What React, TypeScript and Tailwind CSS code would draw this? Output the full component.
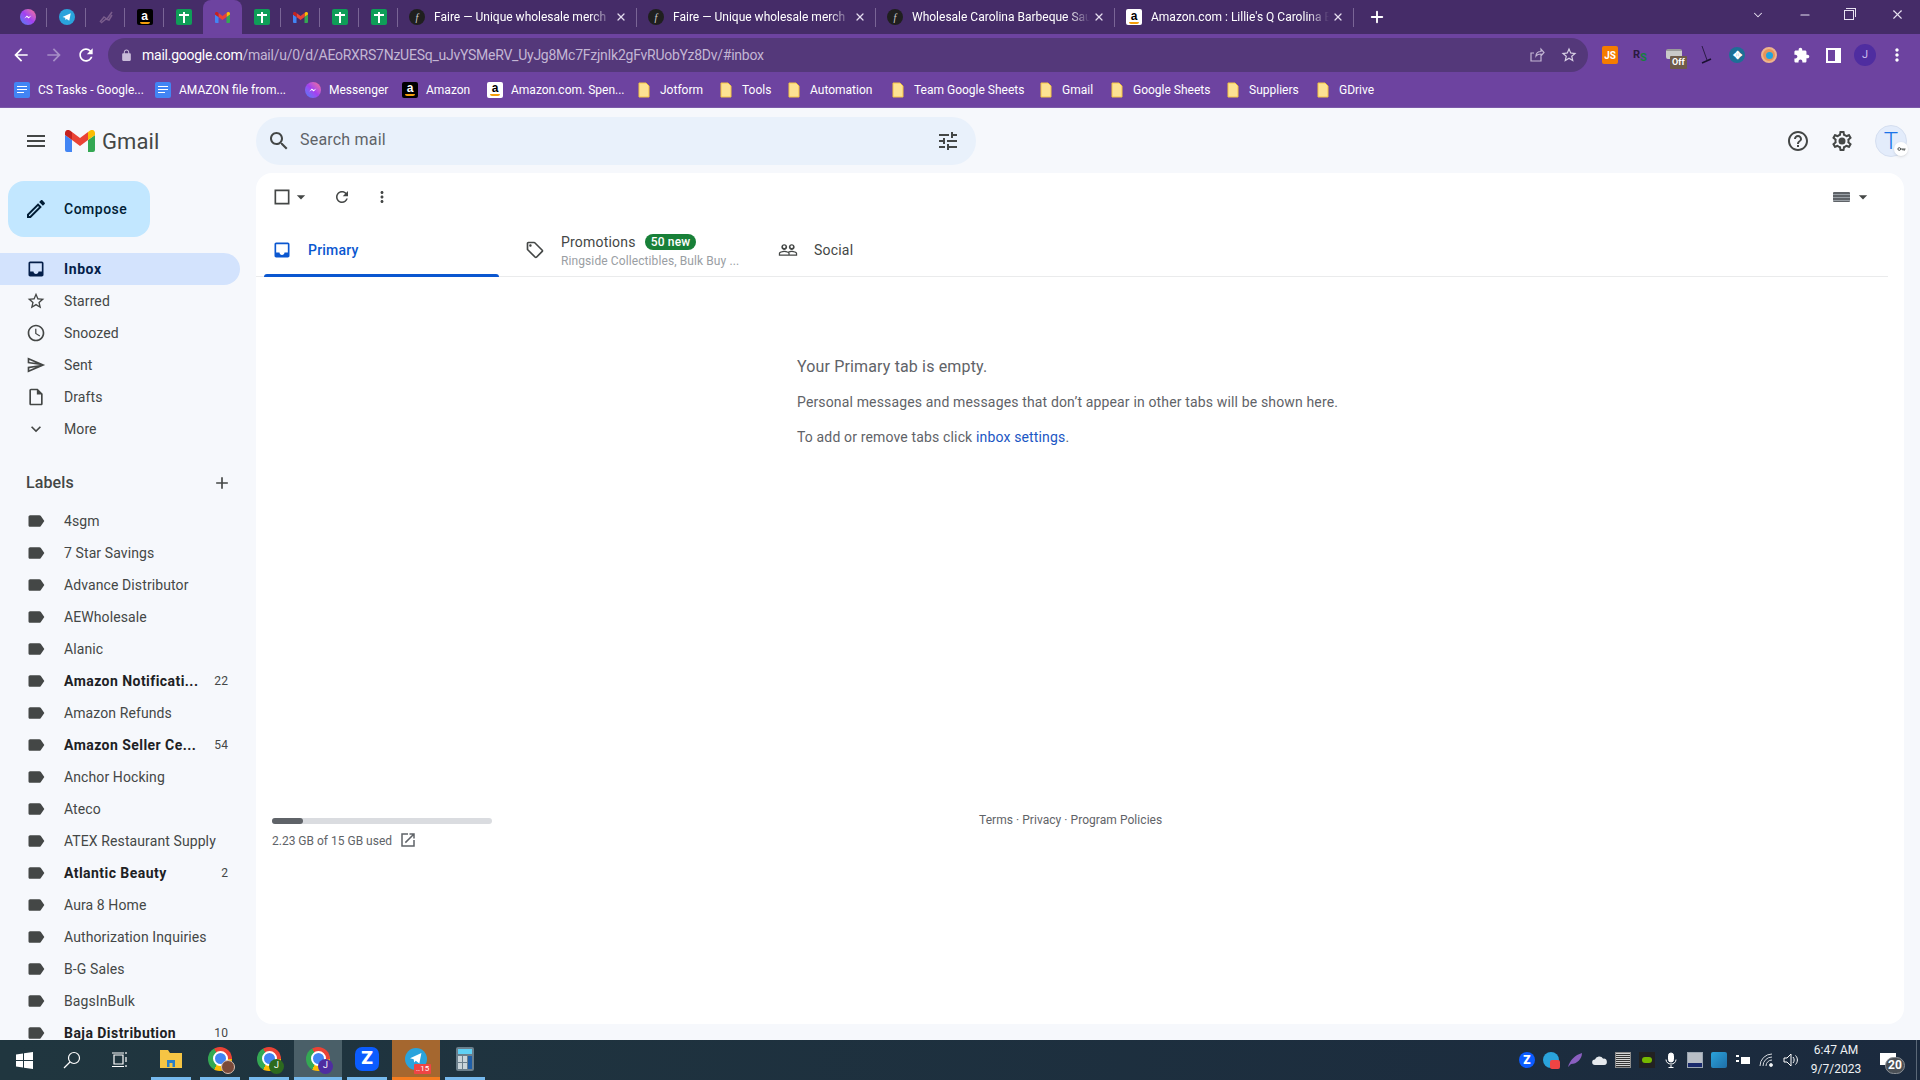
import type { ReactNode } from "react"
import { X, Plus, ChevronDown, Minus } from "lucide-react"

const paths = {
  menu: "M3 18h18v-2H3v2zm0-5h18v-2H3v2zm0-7v2h18V6H3z",
  search: "M15.5 14h-.79l-.28-.27C15.41 12.59 16 11.11 16 9.5 16 5.91 13.09 3 9.5 3S3 5.91 3 9.5 5.91 16 9.5 16c1.61 0 3.09-.59 4.23-1.57l.27.28v.79l5 4.99L20.49 19l-4.99-5zm-6 0C7.01 14 5 11.99 5 9.5S7.01 5 9.5 5 14 7.01 14 9.5 11.99 14 9.5 14z",
  tune: "M3 17v2h6v-2H3zM3 5v2h10V5H3zm10 16v-2h8v-2h-8v-2h-2v6h2zM7 9v2H3v2h4v2h2V9H7zm14 4v-2H11v2h10zm-6-4h2V7h4V5h-4V3h-2v6z",
  help: "M11 18h2v-2h-2v2zm1-16C6.48 2 2 6.48 2 12s4.48 10 10 10 10-4.48 10-10S17.52 2 12 2zm0 18c-4.41 0-8-3.59-8-8s3.59-8 8-8 8 3.59 8 8-3.59 8-8 8zm0-14c-2.21 0-4 1.79-4 4h2c0-1.1.9-2 2-2s2 .9 2 2c0 2-3 1.75-3 5h2c0-2.25 3-2.5 3-5 0-2.21-1.79-4-4-4z",
  settings: "M19.43 12.98c.04-.32.07-.64.07-.98 0-.34-.03-.66-.07-.98l2.11-1.65c.19-.15.24-.42.12-.64l-2-3.46c-.09-.16-.26-.25-.44-.25-.06 0-.12.01-.17.03l-2.49 1c-.52-.4-1.08-.73-1.69-.98l-.38-2.65C14.46 2.18 14.25 2 14 2h-4c-.25 0-.46.18-.49.42l-.38 2.65c-.61.25-1.17.59-1.69.98l-2.49-1c-.06-.02-.12-.03-.18-.03-.17 0-.34.09-.43.25l-2 3.46c-.13.22-.07.49.12.64l2.11 1.65c-.04.32-.07.65-.07.98 0 .33.03.66.07.98l-2.11 1.65c-.19.15-.24.42-.12.64l2 3.46c.09.16.26.25.44.25.06 0 .12-.01.17-.03l2.49-1c.52.4 1.08.73 1.69.98l.38 2.65c.03.24.24.42.49.42h4c.25 0 .46-.18.49-.42l.38-2.65c.61-.25 1.17-.59 1.69-.98l2.49 1c.06.02.12.03.18.03.17 0 .34-.09.43-.25l2-3.46c.12-.22.07-.49-.12-.64l-2.11-1.65zm-1.98-1.71c.04.31.05.52.05.73 0 .21-.02.43-.05.73l-.14 1.13.89.7 1.08.84-.7 1.21-1.27-.51-1.04-.42-.9.68c-.43.32-.84.56-1.25.73l-1.06.43-.16 1.13-.2 1.35h-1.4l-.19-1.35-.16-1.13-1.06-.43c-.43-.18-.83-.41-1.23-.71l-.91-.7-1.06.43-1.27.51-.7-1.21 1.08-.84.89-.7-.14-1.13c-.03-.31-.05-.54-.05-.74s.02-.43.05-.73l.14-1.13-.89-.7-1.08-.84.7-1.21 1.27.51 1.04.42.9-.68c.43-.32.84-.56 1.25-.73l1.06-.43.16-1.13.2-1.35h1.39l.19 1.35.16 1.13 1.06.43c.43.18.83.41 1.23.71l.91.7 1.06-.43 1.27-.51.7 1.21-1.07.85-.89.7.14 1.13zM12 8.5a3.5 3.5 0 1 0 0 7 3.5 3.5 0 0 0 0-7z",
  inbox: "M19 3H4.99c-1.11 0-1.98.89-1.98 2L3 19c0 1.1.88 2 1.99 2H19c1.1 0 2-.9 2-2V5c0-1.11-.9-2-2-2zm0 12h-4c0 1.66-1.35 3-3 3s-3-1.34-3-3H4.99V5H19v10z",
  star: "M22 9.24l-7.19-.62L12 2 9.19 8.63 2 9.24l5.46 4.73L5.82 21 12 17.27 18.18 21l-1.63-7.03L22 9.24zM12 15.4l-3.76 2.27 1-4.28-3.32-2.88 4.38-.38L12 6.1l1.71 4.04 4.38.38-3.32 2.88 1 4.28L12 15.4z",
  clock: "M11.99 2C6.47 2 2 6.48 2 12s4.47 10 9.99 10C17.52 22 22 17.52 22 12S17.52 2 11.99 2zM12 20c-4.42 0-8-3.58-8-8s3.58-8 8-8 8 3.58 8 8-3.58 8-8 8zm.5-13H11v6l5.25 3.15.75-1.23-4.5-2.67z",
  send: "M4.01 6.03l7.51 3.22-7.52-1 .01-2.22m7.5 8.72L4 17.97v-2.22l7.51-1M2.01 3L2 10l15 2-15 2 .01 7L23 12 2.01 3z",
  draft: "M14 2H6c-1.1 0-1.99.9-1.99 2L4 20c0 1.1.89 2 1.99 2H18c1.1 0 2-.9 2-2V8l-6-6zM6 20V4h7v5h5v11H6z",
  more: "M16.59 8.59L12 13.17 7.41 8.59 6 10l6 6 6-6z",
  label: "M17.63 5.84C17.27 5.33 16.67 5 16 5L5 5.01C3.9 5.01 3 5.9 3 7v10c0 1.1.9 1.99 2 1.99L16 19c.67 0 1.27-.33 1.63-.84L22 12l-4.37-6.16z",
  checkbox: "M19 5v14H5V5h14m0-2H3v18h18V3z",
  refresh: "M17.65 6.35C16.2 4.9 14.21 4 12 4c-4.42 0-7.99 3.58-7.99 8s3.57 8 7.99 8c3.73 0 6.84-2.55 7.73-6h-2.08c-.82 2.33-3.04 4-5.65 4-3.31 0-6-2.69-6-6s2.69-6 6-6c1.66 0 3.14.69 4.22 1.78L13 11h7V4l-2.35 2.35z",
  dots: "M12 8c1.1 0 2-.9 2-2s-.9-2-2-2-2 .9-2 2 .9 2 2 2zm0 2c-1.1 0-2 .9-2 2s.9 2 2 2 2-.9 2-2-.9-2-2-2zm0 6c-1.1 0-2 .9-2 2s.9 2 2 2 2-.9 2-2-.9-2-2-2z",
  tag: "M21.41 11.58l-9-9C12.05 2.22 11.55 2 11 2H4c-1.1 0-2 .9-2 2v7c0 .55.22 1.05.59 1.42l9 9c.36.36.86.58 1.41.58s1.05-.22 1.41-.59l7-7c.37-.36.59-.86.59-1.41s-.23-1.06-.59-1.42zM13 20.01L4 11V4h7v-.01l9 8.99-7 7.02zM6.5 5C5.67 5 5 5.67 5 6.5S5.67 8 6.5 8 8 7.33 8 6.5 7.33 5 6.5 5z",
  people: "M16.5 13c-1.2 0-3.07.34-4.5 1-1.43-.67-3.3-1-4.5-1C5.33 13 1 14.08 1 16.25V19h22v-2.75c0-2.17-4.33-3.25-6.5-3.25zm-4 4.5h-10v-1.25c0-.54 2.56-1.75 5-1.75s5 1.21 5 1.75v1.25zm9 0H14v-1.25c0-.46-.2-.86-.52-1.22.88-.3 1.96-.53 3.02-.53 2.44 0 5 1.21 5 1.75v1.25zM7.5 12c1.93 0 3.5-1.57 3.5-3.5S9.43 5 7.5 5 4 6.57 4 8.5 5.57 12 7.5 12zm0-5.5c.83 0 1.5.67 1.5 1.5s-.67 1.5-1.5 1.5S6 8.83 6 8s.67-1.5 1.5-1.5zm9 5.5c1.93 0 3.5-1.57 3.5-3.5S18.43 5 16.5 5 13 6.57 13 8.5s1.57 3.5 3.5 3.5zm0-5.5c.83 0 1.5.67 1.5 1.5s-.67 1.5-1.5 1.5-1.5-.67-1.5-1.5.67-1.5 1.5-1.5z",
  open: "M19 19H5V5h7V3H3v18h18v-9h-2v7zM14 3v2h3.59l-9.83 9.83 1.41 1.41L19 6.41V10h2V3h-7z",
  pencil: "M3 17.25V21h3.75L17.81 9.94l-3.75-3.75L3 17.25zM5.92 19H5v-.92l9.06-9.06.92.92L5.92 19zM20.71 5.63l-2.34-2.34c-.2-.2-.45-.29-.71-.29s-.51.1-.7.29l-1.83 1.83 3.75 3.75 1.83-1.83c.39-.39.39-1.02 0-1.41z",
  add: "M19 13h-6v6h-2v-6H5v-2h6V5h2v6h6v2z",
  back: "M20 11H7.83l5.59-5.59L12 4l-8 8 8 8 1.41-1.41L7.83 13H20v-2z",
  forward: "M12 4l-1.41 1.41L16.17 11H4v2h12.17l-5.58 5.59L12 20l8-8z",
  lock: "M18 8h-1V6c0-2.76-2.24-5-5-5S7 3.24 7 6v2H6c-1.1 0-2 .9-2 2v10c0 1.1.9 2 2 2h12c1.1 0 2-.9 2-2V10c0-1.1-.9-2-2-2zM8.9 8V6c0-1.71 1.39-3.1 3.1-3.1 1.71 0 3.1 1.39 3.1 3.1v2H8.9z",
  extension: "M20.5 11H19V7c0-1.1-.9-2-2-2h-4V3.5C13 2.12 11.88 1 10.5 1S8 2.12 8 3.5V5H4c-1.1 0-1.99.9-1.99 2v3.8H3.5c1.49 0 2.7 1.21 2.7 2.7s-1.21 2.7-2.7 2.7H2V20c0 1.1.9 2 2 2h3.8v-1.5c0-1.49 1.21-2.7 2.7-2.7 1.49 0 2.7 1.21 2.7 2.7V22H17c1.1 0 2-.9 2-2v-4h1.5c1.38 0 2.5-1.12 2.5-2.5S21.88 11 20.5 11z",
  reload: "M17.65 6.35C16.2 4.9 14.21 4 12 4c-4.42 0-7.99 3.58-7.99 8s3.57 8 7.99 8c3.73 0 6.84-2.55 7.73-6h-2.08c-.82 2.33-3.04 4-5.65 4-3.31 0-6-2.69-6-6s2.69-6 6-6c1.66 0 3.14.69 4.22 1.78L13 11h7V4l-2.35 2.35z",
  caret: "M7 10l5 5 5-5z",
}

function Mi({ d, className }: { d: string; className?: string }) {
  return (
    <svg viewBox="0 0 24 24" fill="currentColor" className={"shrink-0 " + (className ?? "")}>
      <path d={d} />
    </svg>
  )
}

function GmailM({ className }: { className?: string }) {
  return (
    <svg viewBox="0 0 30 22" className={className}>
      <path d="M2 22h5V10L0 5v15a2 2 0 0 0 2 2z" fill="#4285f4" />
      <path d="M23 22h5a2 2 0 0 0 2-2V5l-7 5z" fill="#34a853" />
      <path d="M23 2v8l7-5V3c0-2.6-3-4-5-2.400z" fill="#fbbc04" />
      <path d="M7 10V2l8 6 8-6v8l-8 6z" fill="#ea4335" />
      <path d="M0 3v2l7 5V2L5 .6C3 -1 0 .4 0 3z" fill="#c5221f" />
    </svg>
  )
}

function Sheets() {
  return (
    <div className="w-4 h-4 bg-[#0f9d58] rounded-[2px] flex items-center justify-center relative">
      <div className="w-[2px] h-[11px] bg-white" />
      <div className="absolute top-[5px] left-[3px] w-[10px] h-[2px] bg-white" />
    </div>
  )
}

function AmazonIcon({ light }: { light?: boolean }) {
  return (
    <div className={"w-4 h-4 rounded-[2px] flex flex-col items-center justify-center leading-none " + (light ? "bg-white text-black" : "bg-black text-white")}>
      <span className="text-[12px] font-bold leading-[10px] font-[family-name:'Liberation_Sans',sans-serif]">a</span>
      <span className="w-[10px] h-[2px] mt-[1px] rounded-b-full bg-[#f59e0b]" />
    </div>
  )
}

function Messenger() {
  return (
    <div className="w-4 h-4 rounded-full bg-gradient-to-tr from-[#2f7bf6] via-[#a33ff0] to-[#ff6b8a] flex items-center justify-center">
      <svg viewBox="0 0 16 16" className="w-3 h-3">
        <path d="M3 10l3.500-4 2.500 2 3.500-2-3.500 4-2.500-2z" fill="white" />
      </svg>
    </div>
  )
}

function Telegram({ size = "w-4 h-4" }: { size?: string }) {
  return (
    <div className={"rounded-full bg-[#2aa3dc] flex items-center justify-center " + size}>
      <svg viewBox="0 0 16 16" className="w-3/4 h-3/4">
        <path d="M2 8l11-5-2 10-3.500-2.500L6 12l-.5-3z" fill="white" />
      </svg>
    </div>
  )
}

function Faire() {
  return (
    <div className="w-4 h-4 rounded-full bg-[#1f1f1f] flex items-center justify-center text-[10px] italic text-[#cfcfcf] font-[family-name:'Liberation_Serif',serif]">
      f
    </div>
  )
}

function Folder() {
  return (
    <svg viewBox="0 0 16 16" className="w-4 h-4 shrink-0">
      <path d="M3 1h7l3 3v11H3z" fill="#fde293" stroke="#f4c542" strokeWidth="1" />
    </svg>
  )
}

function Docs() {
  return (
    <div className="w-4 h-4 rounded-[2px] bg-[#4285f4] flex flex-col items-center justify-center gap-[2px]">
      <span className="w-[10px] h-[1px] bg-white" />
      <span className="w-[10px] h-[1px] bg-white" />
      <span className="w-[7px] h-[1px] bg-white self-start ml-[3px]" />
    </div>
  )
}

function Chrome({ badge }: { badge?: ReactNode }) {
  return (
    <div className="relative w-6 h-6 rounded-full bg-[conic-gradient(#ea4335_0deg_90deg,#fbbc04_90deg_210deg,#34a853_210deg_330deg,#ea4335_330deg)] flex items-center justify-center">
      <div className="w-[11px] h-[11px] rounded-full bg-[#4285f4] border-2 border-white box-content" />
      {badge}
    </div>
  )
}

const iconTabs: ReactNode[] = [
  <Messenger />,
  <Telegram />,
  <svg viewBox="0 0 16 16" className="w-4 h-4"><path d="M2 13l4-5 3 2 5-7M3 14l5-4 3 1 3-5" stroke="#7a5d8c" strokeWidth="1.500" fill="none" /></svg>,
  <AmazonIcon />,
  <Sheets />,
  <GmailM className="w-[15px] h-[11px]" />,
  <Sheets />,
  <GmailM className="w-[15px] h-[11px]" />,
  <Sheets />,
  <Sheets />,
]

// the tab titles are faded out by the browser, only what shows is written here
const pageTabs = [
  { title: "Faire — Unique wholesale merch", icon: <Faire /> },
  { title: "Faire — Unique wholesale merch", icon: <Faire /> },
  { title: "Wholesale Carolina Barbeque Sau", icon: <Faire /> },
  { title: "Amazon.com : Lillie's Q Carolina B", icon: <AmazonIcon light /> },
]

const bookmarks = [
  { name: "CS Tasks - Google...", icon: <Docs />, w: "w-[141px]" },
  { name: "AMAZON file from...", icon: <Docs />, w: "w-[150px]" },
  { name: "Messenger", icon: <Messenger />, w: "w-[97px]" },
  { name: "Amazon", icon: <AmazonIcon />, w: "w-[85px]" },
  { name: "Amazon.com. Spen...", icon: <AmazonIcon light />, w: "w-[149px]" },
  { name: "Jotform", icon: <Folder />, w: "w-[82px]" },
  { name: "Tools", icon: <Folder />, w: "w-[68px]" },
  { name: "Automation", icon: <Folder />, w: "w-[104px]" },
  { name: "Team Google Sheets", icon: <Folder />, w: "w-[148px]" },
  { name: "Gmail", icon: <Folder />, w: "w-[71px]" },
  { name: "Google Sheets", icon: <Folder />, w: "w-[116px]" },
  { name: "Suppliers", icon: <Folder />, w: "w-[90px]" },
  { name: "GDrive", icon: <Folder />, w: "w-[72px]" },
]

const nav = [
  { name: "Inbox", d: paths.inbox, active: true },
  { name: "Starred", d: paths.star },
  { name: "Snoozed", d: paths.clock },
  { name: "Sent", d: paths.send },
  { name: "Drafts", d: paths.draft },
  { name: "More", d: paths.more },
]

const labels = [
  { name: "4sgm" },
  { name: "7 Star Savings" },
  { name: "Advance Distributor" },
  { name: "AEWholesale" },
  { name: "Alanic" },
  { name: "Amazon Notificati...", count: 22 },
  { name: "Amazon Refunds" },
  { name: "Amazon Seller Ce...", count: 54 },
  { name: "Anchor Hocking" },
  { name: "Ateco" },
  { name: "ATEX Restaurant Supply" },
  { name: "Atlantic Beauty", count: 2 },
  { name: "Aura 8 Home" },
  { name: "Authorization Inquiries" },
  { name: "B-G Sales" },
  { name: "BagsInBulk" },
  { name: "Baja Distribution", count: 10 },
]

function TabStrip() {
  return (
    <div className="h-[34px] bg-[#452c68] flex items-center pl-2 text-white shrink-0">
      {iconTabs.map((icon, i) => (
        <div
          key={i}
          className={
            "relative h-[34px] w-[39px] flex items-center justify-center " +
            (i === 5 ? "bg-[#6d43a0] rounded-t-lg" : "")
          }
        >
          {icon}
          {i !== 4 && i !== 5 && <span className="absolute right-0 top-[8px] h-[19px] w-px bg-[#7a6596]" />}
        </div>
      ))}
      {pageTabs.map((tab, i) => (
        <div key={i} className="relative h-[34px] w-[239px] flex items-center pl-[11px] pr-[8px] shrink-0">
          {tab.icon}
          <span className="ml-[9px] w-[178px] whitespace-nowrap text-[12px] [mask-image:linear-gradient(to_right,black_88%,transparent)]">
            {tab.title}
          </span>
          <X className="w-[12px] h-[12px] ml-[3px] text-[#e4dcef]" strokeWidth={2.500} />
          <span className="absolute right-0 top-[8px] h-[19px] w-px bg-[#7a6596]" />
        </div>
      ))}
      <Plus className="w-[18px] h-[18px] ml-[14px]" strokeWidth={2.500} />
      <div className="ml-auto flex items-center text-[#e8e2f1] h-full pb-[5px]">
        <ChevronDown className="w-[14px] h-[14px] mr-[33px]" strokeWidth={1.800} />
        <Minus className="w-[14px] h-[14px] mr-[32px]" strokeWidth={1.800} />
        <div className="relative w-[10px] h-[10px] border border-[#e8e2f1] mr-[36px]">
          <span className="absolute -top-[3px] left-[1px] w-[10px] h-[9px] border-t border-r border-[#e8e2f1]" />
        </div>
        <X className="w-[15px] h-[15px] mr-[15px]" strokeWidth={1.800} />
      </div>
    </div>
  )
}

function Toolbar() {
  return (
    <div className="h-[38px] bg-[#6d43a0] pt-[4px] flex items-start shrink-0">
      <div className="flex items-center h-[34px] pl-[11px] w-[108px]">
        <Mi d={paths.back} className="w-5 h-5 text-white" />
        <Mi d={paths.forward} className="w-5 h-5 ml-[13px] text-[#a68ec6]" />
        <Mi d={paths.reload} className="w-5 h-5 ml-[12px] text-white" />
      </div>
      <div className="w-[1480px] h-[34px] rounded-full bg-[#54387a] flex items-center pl-[12px] pr-[10px] text-[14px] tracking-[-0.25px]">
        <Mi d={paths.lock} className="w-[13px] h-[13px] text-[#c9bcd9]" />
        <span className="ml-[9px]">
          <span className="text-white">mail.google.com</span>
          <span className="text-[#c3b6d4]">/mail/u/0/d/AEoRXRS7NzUESq_uJvYSMeRV_UyJg8Mc7FzjnIk2gFvRUobYz8Dv/#inbox</span>
        </span>
        <svg viewBox="0 0 16 16" className="ml-auto w-4 h-4 text-[#c3b6d4]" fill="none" stroke="currentColor" strokeWidth="1.200">
          <path d="M12 9.500V14H2V6h3M7 9c0-3 2-4.500 5-4.500V2l3 3.500-3 3.500V7c-2 0-4 .5-5 2z" />
        </svg>
        <Mi d={paths.star} className="ml-[15px] w-[18px] h-[18px] text-[#d8d0e4]" />
      </div>
      <div className="flex items-center h-[34px] ml-[14px] text-white">
        <div className="w-4 h-[18px] rounded-[2px] bg-[#f57c00] text-[10px] font-bold flex items-center justify-center">JS</div>
        <div className="ml-[15px] w-4 text-[11px] font-bold text-[#2a1a40] relative">
          R<span className="absolute left-[7px] top-[3px] text-[#15803d]">S</span>
        </div>
        <div className="relative ml-[17px] w-4 h-[16px]">
          <div className="w-4 h-[10px] mt-[2px] rounded-[2px] bg-[#c9c9c9] border-t-2 border-[#9a9a9a]" />
          <div className="absolute left-[4px] top-[9px] h-[13px] px-[2px] bg-[#6f5b4a] rounded-[1px] text-[9px] font-bold leading-[13px]">Off</div>
        </div>
        <svg viewBox="0 0 16 20" className="ml-[17px] w-4 h-5 text-[#1a1030]" stroke="currentColor" fill="none">
          <path d="M3 1l5 14" strokeWidth="0.800" />
          <path d="M3 18l9-4" strokeWidth="1.500" />
        </svg>
        <div className="ml-[14px] w-4 h-4 rounded-full bg-[#1d6f96] flex items-center justify-center text-[11px] leading-none font-bold">✥</div>
        <div className="ml-[16px] w-4 h-4 rounded-full bg-[#e8935a] border-2 border-[#eeb48c] flex items-center justify-center">
          <span className="w-[7px] h-[7px] rounded-full bg-[#1ea5e0]" />
        </div>
        <Mi d={paths.extension} className="ml-[16px] w-[17px] h-[17px]" />
        <div className="ml-[16px] w-[15px] h-[15px] bg-white flex">
          <span className="ml-[2px] mt-[2px] w-[7px] h-[11px] bg-[#6d43a0]" />
        </div>
        <div className="ml-[13px] w-[22px] h-[22px] rounded-full bg-[#4f2da0] text-[#cdbcec] text-[11px] flex items-center justify-center">J</div>
        <Mi d={paths.dots} className="ml-[11px] w-[20px] h-[20px]" />
      </div>
    </div>
  )
}

function Bookmarks() {
  return (
    <div className="h-[36px] bg-[#6d43a0] border-b border-[#7b5aa8] flex items-center pl-[14px] text-white text-[12px] shrink-0">
      {bookmarks.map((b) => (
        <div key={b.name} className={"flex items-center gap-2 whitespace-nowrap shrink-0 " + b.w}>
          {b.icon}
          <span>{b.name}</span>
        </div>
      ))}
    </div>
  )
}

function Sidebar() {
  return (
    <aside className="w-[256px] shrink-0 overflow-hidden text-[14px] text-[#444746] tracking-[0.1px]">
      <div className="h-[66px] flex items-center pl-6">
        <Mi d={paths.menu} className="w-6 h-6 text-[#444746]" />
        <GmailM className="ml-[17px] w-[30px] h-[22px]" />
        <span className="ml-[7px] text-[22px] text-[#444746]">Gmail</span>
      </div>
      <div className="ml-2 mt-[7px] w-[142px] h-14 rounded-2xl bg-[#c2e7ff] flex items-center pl-4 text-[#001d35] font-medium">
        <Mi d={paths.pencil} className="w-6 h-6" />
        <span className="ml-4 tracking-[0.5px]">Compose</span>
      </div>
      <nav className="mt-4">
        {nav.map((item) => (
          <div
            key={item.name}
            className={
              "w-[240px] h-8 flex items-center pl-[26px] rounded-r-full " +
              (item.active ? "bg-[#d3e3fd] text-[#041e49] font-bold tracking-[0.6px]" : "")
            }
          >
            <Mi d={item.d} className="w-5 h-5" />
            <span className="ml-[18px]">{item.name}</span>
          </div>
        ))}
      </nav>
      <div className="mt-[18px] h-10 w-[240px] pl-[26px] pr-2 flex items-center justify-between">
        <span className="text-[16px] font-medium">Labels</span>
        <Mi d={paths.add} className="w-5 h-5" />
      </div>
      <div className="mt-[2px]">
        {labels.map((label) => (
          <div key={label.name} className="w-[240px] h-8 flex items-center pl-[26px] pr-3">
            <Mi d={paths.label} className="w-5 h-5" />
            <span className={"ml-[18px] whitespace-nowrap " + (label.count ? "font-bold text-[#202124] tracking-[0.45px]" : "")}>{label.name}</span>
            {label.count && <span className="ml-auto text-[12px]">{label.count}</span>}
          </div>
        ))}
      </div>
    </aside>
  )
}

function MainPanel() {
  return (
    <main className="flex-1 flex flex-col min-w-0">
      <header className="h-[65px] shrink-0 flex items-start pt-[9px] text-[#444746]">
        <div className="w-[720px] h-12 rounded-full bg-[#e9f1fb] flex items-center pl-[11px] pr-4">
          <Mi d={paths.search} className="w-6 h-6" />
          <span className="ml-[9px] -mt-[2px] text-[16px] text-[#5f6368] tracking-[0.2px]">Search mail</span>
          <Mi d={paths.tune} className="ml-auto w-6 h-6" />
        </div>
        <div className="ml-auto flex items-center h-12 pr-[13px]">
          <Mi d={paths.help} className="w-6 h-6" />
          <Mi d={paths.settings} className="ml-5 w-6 h-6" />
          <div className="relative ml-[21px] w-8 h-8 rounded-full bg-[#e3ecfb] border border-[#d5dff0] text-[#1a73e8] text-[24px] font-light flex items-center justify-center">
            T
            <span className="absolute -right-[2px] bottom-0 w-[14px] h-[14px] rounded-full bg-white shadow flex items-center justify-center">
              <svg viewBox="0 0 10 6" className="w-[9px] h-[6px] text-[#444746]" fill="none" stroke="currentColor">
                <circle cx="2.500" cy="3" r="1.500" />
                <path d="M4 3h5.500M8 3v2M6.500 3v1.500" />
              </svg>
            </span>
          </div>
        </div>
      </header>

      <div className="flex-1 mr-4 mb-4 bg-white rounded-2xl flex flex-col text-[#444746]">
        <div className="h-12 shrink-0 flex items-center pl-4 pr-[31px]">
          <Mi d={paths.checkbox} className="w-5 h-5" />
          <Mi d={paths.caret} className="w-5 h-5 -ml-[1px]" />
          <Mi d={paths.refresh} className="ml-[22px] w-[18px] h-[18px]" />
          <Mi d={paths.dots} className="ml-[22px] w-[18px] h-[18px]" />
          <div className="ml-auto flex items-center">
            <div className="w-[17px] h-[10px] rounded-[1px] bg-[repeating-linear-gradient(to_bottom,#5f6368_0_2px,#9aa0a6_2px_3px)]" />
            <Mi d={paths.caret} className="w-5 h-5 ml-[3px]" />
          </div>
        </div>

        <div className="mt-2 h-[48px] mr-4 shrink-0 flex border-b border-[#eaebec] text-[14px] tracking-[0.2px]">
          <div className="relative ml-2 w-[235px] flex items-center pl-[8px] pb-[5px] text-[#0b57d0] font-medium">
            <Mi d={paths.inbox} className="w-5 h-5" />
            <span className="ml-[16px]">Primary</span>
            <span className="absolute left-0 right-0 -bottom-px h-[3px] rounded-t-sm bg-[#0b57d0]" />
          </div>
          <div className="w-[264px] flex items-center pl-[26px] pb-[5px]">
            <Mi d={paths.tag} className="w-5 h-5" />
            <div className="ml-[16px]">
              <div className="flex items-center h-[22px]">
                <span>Promotions</span>
                <span className="ml-[9px] h-4 px-[6px] rounded-full bg-[#188038] text-white text-[12px] leading-4 font-medium">50 new</span>
              </div>
              <div className="text-[12px] leading-4 text-[#9a9ea3] whitespace-nowrap tracking-[0.1px]">Ringside Collectibles, Bulk Buy ...</div>
            </div>
          </div>
          <div className="flex items-center pl-[15px] pb-[5px]">
            <Mi d={paths.people} className="w-5 h-5" />
            <span className="ml-[16px]">Social</span>
          </div>
        </div>

        <div className="pl-[541px] pt-[78px] text-[#5f6368] tracking-[0.15px]">
          <p className="text-[16px] leading-6">Your Primary tab is empty.</p>
          <p className="mt-[13px] text-[14px] leading-5">Personal messages and messages that don’t appear in other tabs will be shown here.</p>
          <p className="mt-[15px] text-[14px] leading-5">
            To add or remove tabs click <span className="text-[#1a56c4]">inbox settings</span>.
          </p>
        </div>

        <div className="mt-auto pb-[174px] pl-4 flex items-start text-[12px] text-[#5f6368]">
          <div className="w-[220px]">
            <div className="h-[6px] rounded-full bg-[#dadce0]">
              <div className="w-[31px] h-[6px] rounded-full bg-[#5f6368]" />
            </div>
            <div className="mt-[8px] flex items-center">
              <span>2.23 GB of 15 GB used</span>
              <Mi d={paths.open} className="ml-[7px] w-[18px] h-[18px] -mt-[3px]" />
            </div>
          </div>
          <div className="ml-[487px] -mt-[7px] tracking-[0.05px]">Terms · Privacy · Program Policies</div>
        </div>
      </div>
    </main>
  )
}

function Taskbar() {
  const tray = "w-6 flex items-center justify-center shrink-0"
  return (
    <footer className="h-10 shrink-0 flex items-stretch text-white bg-gradient-to-r from-[#20363f] to-[#1b2a3e]">
      <div className="w-12 flex items-center justify-center">
        <svg viewBox="0 0 17 17" className="w-[17px] h-[17px]" fill="white">
          <path d="M0 2.400 7 1.400V8H0zM8 1.300 17 0v8H8zM0 9h7v6.600L0 14.600zM8 9h9v8l-9-1.300z" />
        </svg>
      </div>
      <div className="w-12 flex items-center justify-center">
        <svg viewBox="0 0 18 18" className="w-[18px] h-[18px]" fill="none" stroke="white" strokeWidth="1.200">
          <circle cx="11" cy="7" r="5.500" />
          <path d="M7 11l-6 6" />
        </svg>
      </div>
      <div className="w-12 flex items-center justify-center">
        <svg viewBox="0 0 18 18" className="w-[18px] h-[18px]" fill="none" stroke="white" strokeWidth="1.200">
          <path d="M3 4h9v9H3zM1 2h12M1 15.500h12M15 1v2M15 6v5M15 14v2" />
        </svg>
      </div>
      <div className="ml-[7px] w-[40px] border-b-[3px] border-[#76b9ed] flex items-center justify-center">
        <svg viewBox="0 0 24 20" className="w-6 h-5">
          <path d="M1 1h8l2 3h12v15H1z" fill="#f6c544" />
          <rect x="8" y="11" width="8" height="7" fill="#2a7fc9" />
          <rect x="10.500" y="14" width="3" height="4" fill="#f6c544" />
        </svg>
      </div>
      <div className="ml-[9px] w-[40px] border-b-[3px] border-[#76b9ed] flex items-center justify-center">
        <Chrome badge={<span className="absolute -right-[3px] -bottom-[3px] w-[14px] h-[14px] rounded-full bg-[#7a4a3a] border border-[#d9c0b0]" />} />
      </div>
      <div className="ml-[9px] w-[40px] border-b-[3px] border-[#76b9ed] flex items-center justify-center">
        <Chrome badge={<span className="absolute -right-[3px] -bottom-[3px] w-[15px] h-[15px] rounded-full bg-[#2d6a1f] text-[9px] flex items-center justify-center">J</span>} />
      </div>
      <div className="ml-[5px] w-[48px] bg-[#4a5f68] border-b-[3px] border-[#76b9ed] flex items-center justify-center">
        <Chrome badge={<span className="absolute -right-[3px] -bottom-[3px] w-[15px] h-[15px] rounded-full bg-[#4f2da0] text-[9px] flex items-center justify-center">J</span>} />
      </div>
      <div className="ml-[5px] w-[40px] border-b-[3px] border-[#76b9ed] flex items-center justify-center">
        <div className="w-6 h-6 rounded-[7px] bg-[#0b5cff] flex items-center justify-center text-[19px] font-black">Z</div>
      </div>
      <div className="relative ml-[5px] w-[48px] bg-[#a5672f] border-b-[3px] border-[#f57c1f] flex items-center justify-center">
        <Telegram size="w-[22px] h-[22px]" />
        <span className="absolute left-[22px] top-[24px] h-[10px] px-[2px] bg-[#ef4444] rounded-[1px] text-[8px] leading-[10px]">..15</span>
      </div>
      <div className="ml-[5px] w-[40px] border-b-[3px] border-[#76b9ed] flex items-center justify-center">
        <div className="w-[18px] h-6 rounded-[2px] bg-[#6b7f8c] p-[2px] flex flex-col gap-[2px]">
          <span className="h-[5px] bg-[#5fd0f5]" />
          <span className="flex-1 grid grid-cols-3 gap-[1px]">
            <span className="bg-[#c9d4da]" /><span className="bg-[#c9d4da]" /><span className="bg-[#1f5fa8] row-span-2" />
            <span className="bg-[#c9d4da]" /><span className="bg-[#c9d4da]" />
          </span>
        </div>
      </div>

      <div className="ml-auto flex items-center">
        <div className={tray}><div className="w-4 h-4 rounded-full bg-[#0b5cff] text-[12px] font-black flex items-center justify-center">Z</div></div>
        <div className={tray}><div className="relative w-4 h-4 rounded-full bg-[#2aa3dc]"><span className="absolute right-[-1px] bottom-[-1px] w-[10px] h-[9px] rounded-[2px] bg-[#ef4444]" /></div></div>
        <div className={tray}><svg viewBox="0 0 16 16" className="w-4 h-4"><path d="M1 15C3 8 8 3 15 1c0 6-5 11-11 11z" fill="#8a5fc0" /></svg></div>
        <div className={tray}><svg viewBox="0 0 18 12" className="w-[17px] h-[11px]"><path d="M4 11a3 3 0 0 1 0-6 5 5 0 0 1 9-1 3.500 3.500 0 0 1 1 7z" fill="#e6e9ed" /></svg></div>
        <div className={tray}><div className="w-4 h-4 bg-[repeating-linear-gradient(to_bottom,#d4d4d4_0_1px,#333_1px_2px)] border border-[#8a8a8a]" /></div>
        <div className={tray}><div className="w-4 h-4 bg-[#222] flex items-center justify-center"><span className="w-[10px] h-[6px] rounded-full bg-[#76b900]" /></div></div>
        <div className={tray}><svg viewBox="0 0 16 16" className="w-4 h-4" fill="none" stroke="white"><rect x="5.500" y="1" width="5" height="9" rx="2.500" fill="white" /><path d="M3 7.500c0 6 10 6 10 0M8 13v2M5.500 15.500h5" /></svg></div>
        <div className={tray}><div className="w-4 h-4 border border-[#9aa5b1] bg-[#b8bec6] relative"><span className="absolute left-0 right-0 bottom-0 h-[4px] bg-[#1a2a6c]" /></div></div>
        <div className={tray}><div className="w-4 h-4 rounded-[2px] bg-gradient-to-br from-[#2aa3dc] to-[#1f6fa8]" /></div>
        <div className={tray}><svg viewBox="0 0 16 12" className="w-4 h-3" fill="white"><path d="M1 1h3v2H1zM6 3h9v7H6zM1 6h3v2H1z" /></svg></div>
        <div className={tray}><svg viewBox="0 0 16 14" className="w-4 h-[14px]" fill="none" stroke="#d5d9de" strokeWidth="1"><path d="M1 13A12 12 0 0 1 13 1M4 13a9 9 0 0 1 9-9M7 13a6 6 0 0 1 6-6" /><circle cx="12" cy="12" r="1.500" fill="white" /></svg></div>
        <div className={tray}><svg viewBox="0 0 16 14" className="w-4 h-[14px]" fill="none" stroke="white" strokeWidth="1"><path d="M1 5h3l4-4v12l-4-4H1zM10 4c1.500 1.500 1.500 4.500 0 6M12.500 2.500c2.500 2.500 2.500 6.500 0 9" /></svg></div>
        <div className="w-[66px] text-center text-[12px] leading-[19px] text-[#eef1f4]">
          <div>6:47 AM</div>
          <div>9/7/2023</div>
        </div>
        <div className="relative ml-[11px] w-[24px] h-10 flex items-center">
          <div className="w-4 h-3 bg-white -mt-[2px]" />
          <span className="absolute left-[5px] top-[17px] w-5 h-[17px] rounded-full bg-[#4a4f55] border border-[#8a8f95] text-[12px] font-bold leading-[15px] text-center">20</span>
        </div>
        <div className="ml-[12px] w-[4px] h-10 border-l border-[#5b6877]" />
      </div>
    </footer>
  )
}

export default function App() {
  return (
    <div className="w-[1920px] h-[1080px] flex flex-col overflow-hidden bg-[#f6f8fc] font-[family-name:Roboto,sans-serif]">
      <TabStrip />
      <Toolbar />
      <Bookmarks />
      <div className="flex-1 flex min-h-0">
        <Sidebar />
        <MainPanel />
      </div>
      <Taskbar />
    </div>
  )
}
